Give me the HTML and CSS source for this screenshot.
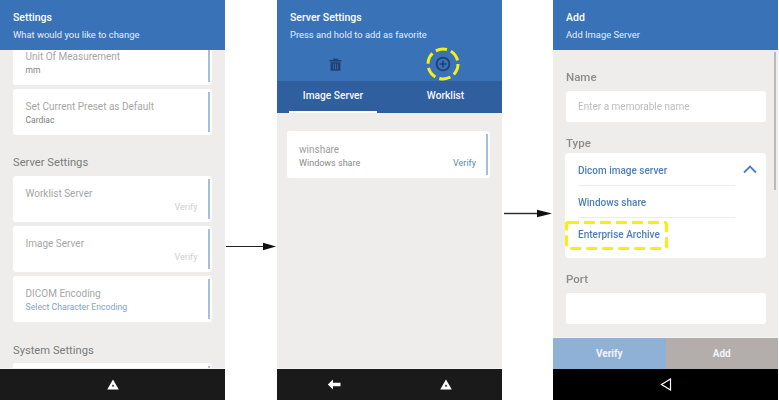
FILE: index.html
```html
<!DOCTYPE html>
<html lang="en">

<head>
  <meta charset="UTF-8">
  <title>Server settings steps</title>
  <link rel="stylesheet" href="styles.css">
</head>

<body>
  <div class="steps">
    <!-- settings screen -->
    <section class="screen">
      <header class="head">
        <h1>Settings</h1>
        <p>What would you like to change</p>
      </header>
      <div class="body body-settings">
        <div class="card card-cut">
          <div class="card-title">Unit Of Measurement</div>
          <div class="card-sub">mm</div>
        </div>
        <div class="card">
          <div class="card-title">Set Current Preset as Default</div>
          <div class="card-sub">Cardiac</div>
        </div>
        <h2 class="group">Server Settings</h2>
        <div class="card">
          <div class="card-title">Worklist Server</div>
          <div class="card-verify">Verify</div>
        </div>
        <div class="card">
          <div class="card-title">Image Server</div>
          <div class="card-verify">Verify</div>
        </div>
        <div class="card">
          <div class="card-title">DICOM Encoding</div>
          <div class="card-sub card-link">Select Character Encoding</div>
        </div>
        <h2 class="group group-system">System Settings</h2>
        <div class="card"></div>
      </div>
      <nav class="nav">
        <svg width="12" height="11" viewBox="0 0 12 11"><path d="M6 0.5 11.8 10.5H0.2Z" fill="#fff"/><path d="M6 5.2 7.3 7.6H4.7Z" fill="#1a1a1a"/></svg>
      </nav>
    </section>

    <div class="arrow arrow-one"><svg width="51" height="9" viewBox="0 0 51 9"><path d="M0 4.5H38" stroke="#222" stroke-width="1.2"/><path d="M37 0.8 50 4.5 37 8.2Z" fill="#111"/></svg></div>

    <!-- server list screen -->
    <section class="screen">
      <header class="head head-tall">
        <h1>Server Settings</h1>
        <p>Press and hold to add as favorite</p>
        <div class="actions">
          <span class="action">
            <svg width="13" height="13" viewBox="0 0 13 13"><path d="M0.5 2H12.5V3.5H0.5ZM4.3 0.4H8.7V2H4.3ZM1.6 4.2H11.4V12.8H1.6Z" fill="#1f3f70"/><path d="M4.4 5.6V11.4M6.5 5.6V11.4M8.6 5.6V11.4" stroke="#3a72b8" stroke-width="0.8"/></svg>
          </span>
          <span class="action">
            <svg width="34" height="34" viewBox="0 0 34 34"><circle cx="17" cy="17" r="15" fill="none" stroke="#f5f010" stroke-width="3" stroke-dasharray="11.5 4.2"/><circle cx="17" cy="17" r="6.4" fill="none" stroke="#1f3f70" stroke-width="1.8"/><path d="M13.6 17H20.4M17 13.6V20.4" stroke="#1f3f70" stroke-width="1.5"/></svg>
          </span>
        </div>
      </header>
      <div class="tabs">
        <span class="tab tab-on">Image Server</span>
        <span class="tab">Worklist</span>
      </div>
      <div class="body body-list">
        <div class="card card-server">
          <div class="card-title">winshare</div>
          <div class="card-row">
            <span class="card-sub">Windows share</span>
            <span class="verify-on">Verify</span>
          </div>
        </div>
      </div>
      <nav class="nav nav-split">
        <svg width="14" height="11" viewBox="0 0 14 11"><path d="M6 0.5 0.8 5.5 6 10.5V7.3H13.5V3.7H6Z" fill="#fff"/></svg>
        <svg width="12" height="11" viewBox="0 0 12 11"><path d="M6 0.5 11.8 10.5H0.2Z" fill="#fff"/><path d="M6 5.2 7.3 7.6H4.7Z" fill="#1a1a1a"/></svg>
      </nav>
    </section>

    <div class="arrow arrow-two"><svg width="49" height="9" viewBox="0 0 49 9"><path d="M0 4.5H34" stroke="#333" stroke-width="1.6"/><path d="M33 0.8 48 4.5 33 8.2Z" fill="#111"/></svg></div>

    <!-- add server screen -->
    <section class="screen">
      <header class="head">
        <h1>Add</h1>
        <p>Add Image Server</p>
      </header>
      <div class="body body-form">
        <label class="label">Name</label>
        <div class="input">Enter a memorable name</div>
        <label class="label label-type">Type</label>
        <div class="select">
          <div class="option option-head">
            <span>Dicom image server</span>
            <svg width="14" height="9" viewBox="0 0 14 9"><path d="M1 7.5 7 1.5 13 7.5" fill="none" stroke="#4d7fc0" stroke-width="1.8"/></svg>
          </div>
          <div class="option">Windows share</div>
          <div class="option option-last">
            <span>Enterprise Archive</span>
            <svg class="dash" width="103" height="29" viewBox="0 0 103 29"><rect x="1.5" y="1.5" width="100" height="26" rx="1.5" fill="none" stroke="#f7f200" stroke-width="3" stroke-dasharray="11 5"/></svg>
          </div>
        </div>
        <label class="label label-port">Port</label>
        <div class="input"></div>
      </div>
      <div class="buttons">
        <span class="btn btn-verify">Verify</span>
        <span class="btn btn-add">Add</span>
      </div>
      <nav class="nav nav-black">
        <svg width="12" height="13" viewBox="0 0 12 13"><path d="M10.5 1 1.5 6.5 10.5 12Z" fill="none" stroke="#fff" stroke-width="1.2"/></svg>
      </nav>
    </section>
  </div>
</body>

</html>
```

FILE: styles.css
```css
* {
  box-sizing: border-box;
}

html,
body {
  margin: 0;
  padding: 0;
  background: #fff;
}

body {
  width: 779px;
  height: 401px;
  overflow: hidden;
  font-family: Roboto, "Liberation Sans", sans-serif;
}

.steps {
  display: flex;
  height: 400px;
  filter: blur(0.5px);
}

.screen {
  width: 225px;
  height: 400px;
  display: flex;
  flex-direction: column;
  background: #eeedeb;
  flex: none;
}

.head {
  height: 50px;
  flex: none;
  padding: 11px 13px 0;
  background: #3a72b8;
  color: #fff;
}

.head h1 {
  margin: 0;
  font-size: 10.5px;
  line-height: 13px;
  font-weight: 500;
}

.head p {
  margin: 4px 0 0;
  font-size: 9.4px;
  line-height: 13px;
  color: #e6edf6;
}

.head-tall {
  height: 81px;
}

.actions {
  display: flex;
  margin: 0 -13px;
  padding: 0 5px;
}

.action {
  flex: 1;
  height: 34px;
  margin-top: 6px;
  display: flex;
  align-items: center;
  justify-content: center;
}

.tabs {
  height: 32px;
  flex: none;
  display: flex;
  padding: 0 13px 0 12px;
  background: #2f5f9f;
  color: #f4f6fa;
  font-size: 10.2px;
  font-weight: 500;
}

.tab {
  flex: 1;
  padding-top: 9px;
  text-align: center;
}

.tab:last-child {
  flex: none;
  width: 112px;
  padding-left: 25px;
}

.tab-on {
  border-bottom: 2px solid #fff;
}

.body {
  flex: 1;
  min-height: 0;
  overflow: hidden;
}

.body-settings {
  padding: 0 13px;
}

.body-list {
  padding: 18px 12px 18px 10px;
}

.body-form {
  padding: 20px 12px 0 13px;
  position: relative;
}

.body-form::after {
  content: "";
  position: absolute;
  top: 2px;
  right: 2px;
  width: 2px;
  height: 138px;
  background: #b9b9b9;
}

.card {
  position: relative;
  height: 46px;
  margin-bottom: 4px;
  padding: 11px 12.5px 0;
  background: #fff;
  border-radius: 3px;
}

.card::after {
  content: "";
  position: absolute;
  top: 3px;
  bottom: 3px;
  right: 2px;
  width: 2px;
  background: #a5bedd;
}

.card-cut {
  height: 35px;
  padding-top: 0;
  border-radius: 0 0 3px 3px;
}

.card-cut::after {
  top: 0;
}

.card-title {
  font-size: 10px;
  line-height: 14px;
  color: #a6a6a6;
}

.card-sub {
  font-size: 8.5px;
  line-height: 12px;
  color: #808080;
}

.card-link {
  font-size: 8.7px;
  color: #7ba5d3;
}

.card-verify {
  font-size: 9px;
  line-height: 12px;
  text-align: right;
  margin-right: 2px;
  color: #cfcfcf;
}

.group {
  margin: 20px 0 6px;
  font-size: 11.2px;
  line-height: 15px;
  font-weight: 400;
  color: #7b7b7b;
}

.group-system {
  margin: 21px 0 5px;
}

.card-server {
  height: 47px;
  padding: 12px 12px 0;
}

.card-row {
  display: flex;
  justify-content: space-between;
  align-items: center;
  margin-right: 2px;
}

.card-server .card-sub {
  font-size: 9px;
  color: #8a8a8a;
}

.card-server .card-title {
  color: #9d9d9d;
}

.verify-on {
  font-size: 9px;
  line-height: 12px;
  color: #5c88b8;
}

.label {
  display: block;
  font-size: 11.5px;
  font-weight: 500;
  line-height: 14px;
  color: #8b8b8b;
}

.label-type {
  margin-top: 14px;
}

.label-port {
  margin-top: 14px;
}

.input {
  height: 31px;
  margin-top: 7px;
  padding: 9px 12px 0;
  background: #fff;
  border-radius: 3px;
  font-size: 10px;
  line-height: 13px;
  color: #bcbcbc;
}

.select {
  height: 105px;
  margin: 3px 0 0 -1px;
  padding: 0 13px;
  background: #fff;
  border-radius: 4px;
  font-size: 10px;
  font-weight: 500;
  color: #4f7ebd;
}

.option {
  height: 32px;
  padding-top: 10px;
  line-height: 13px;
  width: 157px;
}

.option-head {
  display: flex;
  justify-content: space-between;
  width: auto;
  height: 33px;
  padding-top: 11px;
  margin-right: -4px;
  position: relative;
}

.option-head svg {
  margin-top: 1px;
}

.option-head::after {
  content: "";
  position: absolute;
  left: 0;
  bottom: 0;
  width: 157px;
  border-bottom: 1px solid #ececec;
}

.option:nth-child(2) {
  border-bottom: 1px solid #ececec;
}

.option-last {
  position: relative;
}

/* yellow box round the last option */
.dash {
  position: absolute;
  left: -13px;
  top: 3px;
}

.buttons {
  height: 32px;
  flex: none;
  display: flex;
  border-top: 1px solid #f4f4f4;
  color: #f2f4f7;
  font-size: 10px;
  font-weight: 700;
}

.btn {
  flex: 1;
  display: flex;
  align-items: center;
  justify-content: center;
}

.btn-verify {
  background: #8fb1d5;
}

.btn-add {
  background: #b3adab;
}

.nav {
  height: 32px;
  flex: none;
  display: flex;
  align-items: center;
  justify-content: center;
  background: #1a1a1a;
  border-top: 1px solid #f4f4f4;
}

.nav-split {
  justify-content: space-around;
}

.nav-black {
  height: 31px;
  border-top: 0;
  background: #000;
}

.arrow {
  width: 52px;
  flex: none;
  display: flex;
  padding-left: 1px;
}

.arrow-one {
  padding-top: 242px;
}

.arrow-two {
  width: 51px;
  padding-left: 2px;
  padding-top: 209px;
}
```
